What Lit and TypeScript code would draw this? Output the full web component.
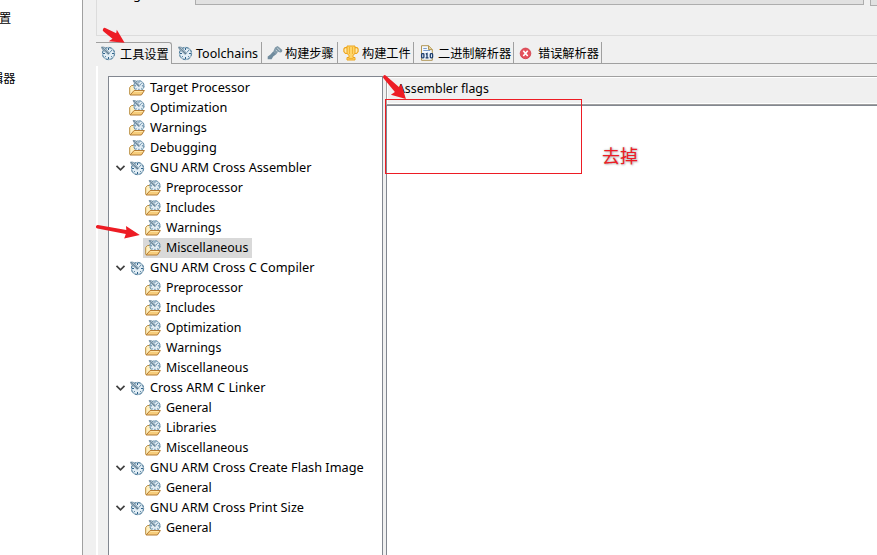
import { LitElement, html, css, svg, TemplateResult } from "lit";
import { customElement } from "lit/decorators.js";
import { classMap } from "lit/directives/class-map.js";

interface Node { label: string; level: number; group?: boolean; selected?: boolean }

const leaf = (label: string, level = 2, selected = false): Node => ({ label, level, selected });
const group = (label: string): Node => ({ label, level: 1, group: true });

const NODES: Node[] = [
  leaf("Target Processor", 1), leaf("Optimization", 1), leaf("Warnings", 1), leaf("Debugging", 1),
  group("GNU ARM Cross Assembler"),
  leaf("Preprocessor"), leaf("Includes"), leaf("Warnings"), leaf("Miscellaneous", 2, true),
  group("GNU ARM Cross C Compiler"),
  leaf("Preprocessor"), leaf("Includes"), leaf("Optimization"), leaf("Warnings"), leaf("Miscellaneous"),
  group("Cross ARM C Linker"),
  leaf("General"), leaf("Libraries"), leaf("Miscellaneous"),
  group("GNU ARM Cross Create Flash Image"), leaf("General"),
  group("GNU ARM Cross Print Size"), leaf("General"),
];

const dial = svg`
  <circle cx="8.5" cy="8.5" r="6" fill="#e3eef5" stroke="#9db7c8" stroke-width="1.3"/>
  <circle cx="8.5" cy="8.5" r="6.1" fill="none" stroke="#527f9d" stroke-width="1" stroke-dasharray="2.4 2.39"/>
  <path d="M8.5 3v2M8.5 12v2M3 8.5h2M12 8.5h2" stroke="#2f638b" stroke-width="1"/>
  <path d="M12 5l-2.2 2.5M5 12l1-1M12 12l-1-1" stroke="#54809f" stroke-width=".9"/>
  <path d="M1.5 2l2.8.2 5.2 6-1.2 1.2-6-5.2z" fill="#b9cbd7" stroke="#56788f" stroke-width=".7"/>
  <path d="M2.2 2.5l6.8 6.5" stroke="#3c5a70" stroke-width=".7"/>`;

const toolIcon = html`<svg width="16" height="16" viewBox="0 0 16 16">${dial}</svg>`;
const folderIcon = html`<svg width="16" height="16" viewBox="0 0 16 16">
  <path d="M.7 14.6V7.4L2.7 5.5h3l1.2 1.5h6.2v4" fill="#fff0c0" stroke="#b98a3c"/>
  <g transform="translate(2.8 -1.3) scale(.84)">${dial}</g>
  <path d="M1.1 15l4-4.5h10.3l-3 4.5z" fill="#f7cd7c" stroke="#b57c34"/>
  <path d="M5.5 11.5h8.5" stroke="#ffe5a6"/>
</svg>`;
const hammerIcon = html`<svg width="16" height="16" viewBox="0 0 16 16">
  <path d="M8 2.6L10.5 1l1.4.9L15.3 5l-.3 2-1.8.4L11 6.8 9.5 9 6.4 6.2z" fill="#8199a8"/>
  <path d="M6.4 6.2l3.1 2.9-3.3 2.3-1.6 2.8H.7v-2.7l2.5-1.7z" fill="#718c9e"/>
  <path d="M10.2 3l2.8 2.7M8.8 4.8l1.5 1.8" stroke="#dbe4e9" stroke-width=".8"/>
</svg>`;
const cupIcon = html`<svg width="16" height="16" viewBox="0 0 16 16">
  <path d="M4 2.6H2L.9 4v2.5L2.5 8.5H5M12 2.6h2L15.1 4v2.5l-1.6 2H11" fill="#ffe9ae" stroke="#eda51d" stroke-width="1.2"/>
  <path d="M4 1h8v7.5l-2 1.8v2.2h2V15H4v-2.5h2v-2.2L4 8.5z" fill="#ffd568" stroke="#eda51d"/>
  <path d="M6.5 2v7M9.5 2v7M5.5 13.5h5" stroke="#f2b535"/>
</svg>`;
const binaryIcon = html`<svg width="16" height="16" viewBox="0 0 16 16">
  <path d="M2.5 15.3V.7h7.2l3.6 3.7v10.9z" fill="#f3f8fe" stroke="#b19554"/>
  <path d="M9.5.8v3.8h3.8" fill="#e5d39a" stroke="#b19554"/>
  <path d="M4.3 3.5h3.5M4.3 5.5h6.8" stroke="#7a9cca"/>
  <path d="M3 8h10v5.6h-10z" fill="#e9f1fa"/>
  <g fill="none" stroke="#1d3e6d" stroke-width="1.3"><rect x="2.6" y="8.6" width="2.3" height="4.2" rx=".8"/><path d="M6.8 9.2l1.2-.6v4.2M6.6 12.8h2.9"/><rect x="11.3" y="8.6" width="2.3" height="4.2" rx=".8"/></g>
</svg>`;
const errorIcon = html`<svg width="16" height="16" viewBox="0 0 16 16">
  <circle cx="8.5" cy="8.4" r="5.3" fill="#e5505b" stroke="#d13a47" stroke-width=".8"/>
  <path d="M6.3 5.7l4.4 5.4M10.7 5.7l-4.4 5.4" stroke="#fff" stroke-width="1.6"/>
</svg>`;

const TABS: { label: string; icon: TemplateResult; cls: string }[] = [
  { label: "工具设置", icon: toolIcon, cls: "t1" },
  { label: "Toolchains", icon: toolIcon, cls: "t2" },
  { label: "构建步骤", icon: hammerIcon, cls: "t3" },
  { label: "构建工件", icon: cupIcon, cls: "t4" },
  { label: "二进制解析器", icon: binaryIcon, cls: "t5" },
  { label: "错误解析器", icon: errorIcon, cls: "t6" },
];

@customElement("app-root")
export class AppRoot extends LitElement {
  static styles = css`
    :host { display: flex; position: relative; width: 877px; height: 555px; overflow: hidden; background: #f0f0f0;
      color: #000; font: 13px/20px "Noto Sans", "Noto Sans CJK SC", sans-serif; }
    * { box-sizing: border-box; }
    svg { display: block; flex: none; }
    .nav { width: 83px; flex: none; background: #fff; border-right: 1px solid #a0a0a0; font-size: 12.2px; }
    .nav div { height: 60px; padding-top: 9px; white-space: nowrap; display: flex; }
    .nav .a { margin-left: -1px; }
    .nav .b { margin-left: -9px; }
    .main { flex: 1; min-width: 0; margin-left: 13px; display: flex; flex-direction: column; }
    .config { height: 36px; flex: none; border: solid #dcdcdc; border-width: 0 0 1px 1px; display: flex; align-items: flex-start; }
    .config span { flex: none; width: 98px; height: 20px; margin-top: -16px; padding-left: 4px; white-space: nowrap; }
    .combo { flex: none; width: 669px; height: 5px; background: #e1e1e1; border: solid #adadad; border-width: 0 1px 1px; }
    .button { flex: none; margin-left: 6px; width: 20px; height: 6px; background: #e1e1e1; border: solid #adadad; border-width: 0 0 1px 1px; }
    .tabs { height: 22px; margin-top: 6px; flex: none; display: flex; }
    .tab { display: flex; align-items: center; border-right: 1px solid #a0a0a0; border-bottom: 1px solid #a0a0a0;
      font-size: 12.2px; white-space: nowrap; padding-left: 5px; gap: 3px; }
    .tab span { position: relative; top: 1px; }
    .t1 { width: 76px; border-top: 1px solid #a0a0a0; border-bottom: 0; border-top-right-radius: 3px; gap: 4px; padding-left: 4px; }
    .t1 svg { margin-top: -1px; }
    .t2 { width: 90px; font-size: 12.5px; }
    .t3 { width: 76px; gap: 2px; }
    .t4 { width: 76px; gap: 3px; }
    .t5 { width: 100px; gap: 3px; }
    .t6 { width: 88px; padding-left: 3px; gap: 5px; }
    .rest { flex: 1; border-bottom: 1px solid #a0a0a0; }
    .body { flex: 1; min-height: 0; margin-top: 2px; border-left: 2px solid #fff; padding: 10px 0 0 10px; display: flex; }
    .tree { width: 275px; flex: none; background: #fff; border: 1px solid #828790; border-bottom: 0; padding-top: 1px; }
    .row { height: 20px; display: flex; align-items: center; padding-left: 5px; }
    .row.l2 { padding-left: 34px; }
    .arrow { width: 15px; }
    .item { height: 20px; display: flex; align-items: center; gap: 5px; padding-right: 4px; white-space: nowrap; }
    .l2 .item { padding-left: 2px; }
    .sel .item { background: #d9d9d9; }
    .label { position: relative; top: -1px; font-size: 12.72px; }
    .l2 .label { top: 0; font-size: 12.4px; }
    .pane { flex: 1; min-width: 0; margin-left: 3px; display: flex; flex-direction: column; }
    .head { height: 29px; flex: none; border: 1px solid #a0a0a0; border-right: 0; box-shadow: inset 1px 1px #fff, inset 0 -1px #fff; padding: 2px 0 0 10px; font-size: 12.3px; }
    .list { flex: 1; background: #fff; border: solid #828790; border-width: 1px 0 0 1px; }
    .notes { position: absolute; left: 0; top: 0; }
    .frame { position: absolute; left: 385px; top: 99px; width: 197px; height: 75px; border: 1px solid #ed1c24; }
    .remark { position: absolute; left: 602px; top: 143px; font-size: 18px; line-height: 24px; color: #ed1c24;
      font-family: "Noto Sans CJK SC", sans-serif; text-shadow: 0 0 2px #aaa, 1px 1px 2px #ccc; }
  `;

  row(n: Node) {
    return html`<div class=${classMap({ row: true, l2: n.level === 2, sel: !!n.selected })}>
      ${n.level === 1 ? html`<span class="arrow">${n.group ? html`<svg width="12" height="12" viewBox="0 0 12 12"><path d="M2.5 3.8l4 4 4-4" fill="none" stroke="#404040" stroke-width="1.7"/></svg>` : ""}</span>` : ""}
      <div class="item">${n.group ? toolIcon : folderIcon}<span class="label">${n.label}</span></div>
    </div>`;
  }

  render() {
    return html`
      <div class="nav"><div><span class="a">置</span></div><div><span class="b">辑器</span></div></div>
      <div class="main">
        <div class="config"><span>Configuration</span><div class="combo"></div><div class="button"></div></div>
        <div class="tabs">
          ${TABS.map((t) => html`<div class="tab ${t.cls}">${t.icon}<span>${t.label}</span></div>`)}
          <div class="rest"></div>
        </div>
        <div class="body">
          <div class="tree">${NODES.map((n) => this.row(n))}</div>
          <div class="pane"><div class="head">Assembler flags</div><div class="list"></div></div>
        </div>
      </div>
      <div class="frame"></div>
      <div class="remark">去掉</div>
      <svg class="notes" width="877" height="555" viewBox="0 0 877 555">
        <g fill="#ed1c24">
          <path d="M105.8 28.2L116.2 33.2l.6-3.4L124.6 42.8l-15.8-1.5 3.7-2.5L103.8 31.7a2 2 0 0 1 2-3.5z"/>
          <path d="M98 225L126.3 230l-.3-4 13.8 9-15.6 3.5 1.6-4.5L97.5 228.6a1.8 1.8 0 0 1 .5-3.6z"/>
          <path d="M386 75.7L399.2 87.3l2.2-3.2 4.5 14.8-15-4.2 4-2.6L383.5 78.3a1.8 1.8 0 0 1 2.5-2.6z"/>
        </g>
      </svg>`;
  }
}
